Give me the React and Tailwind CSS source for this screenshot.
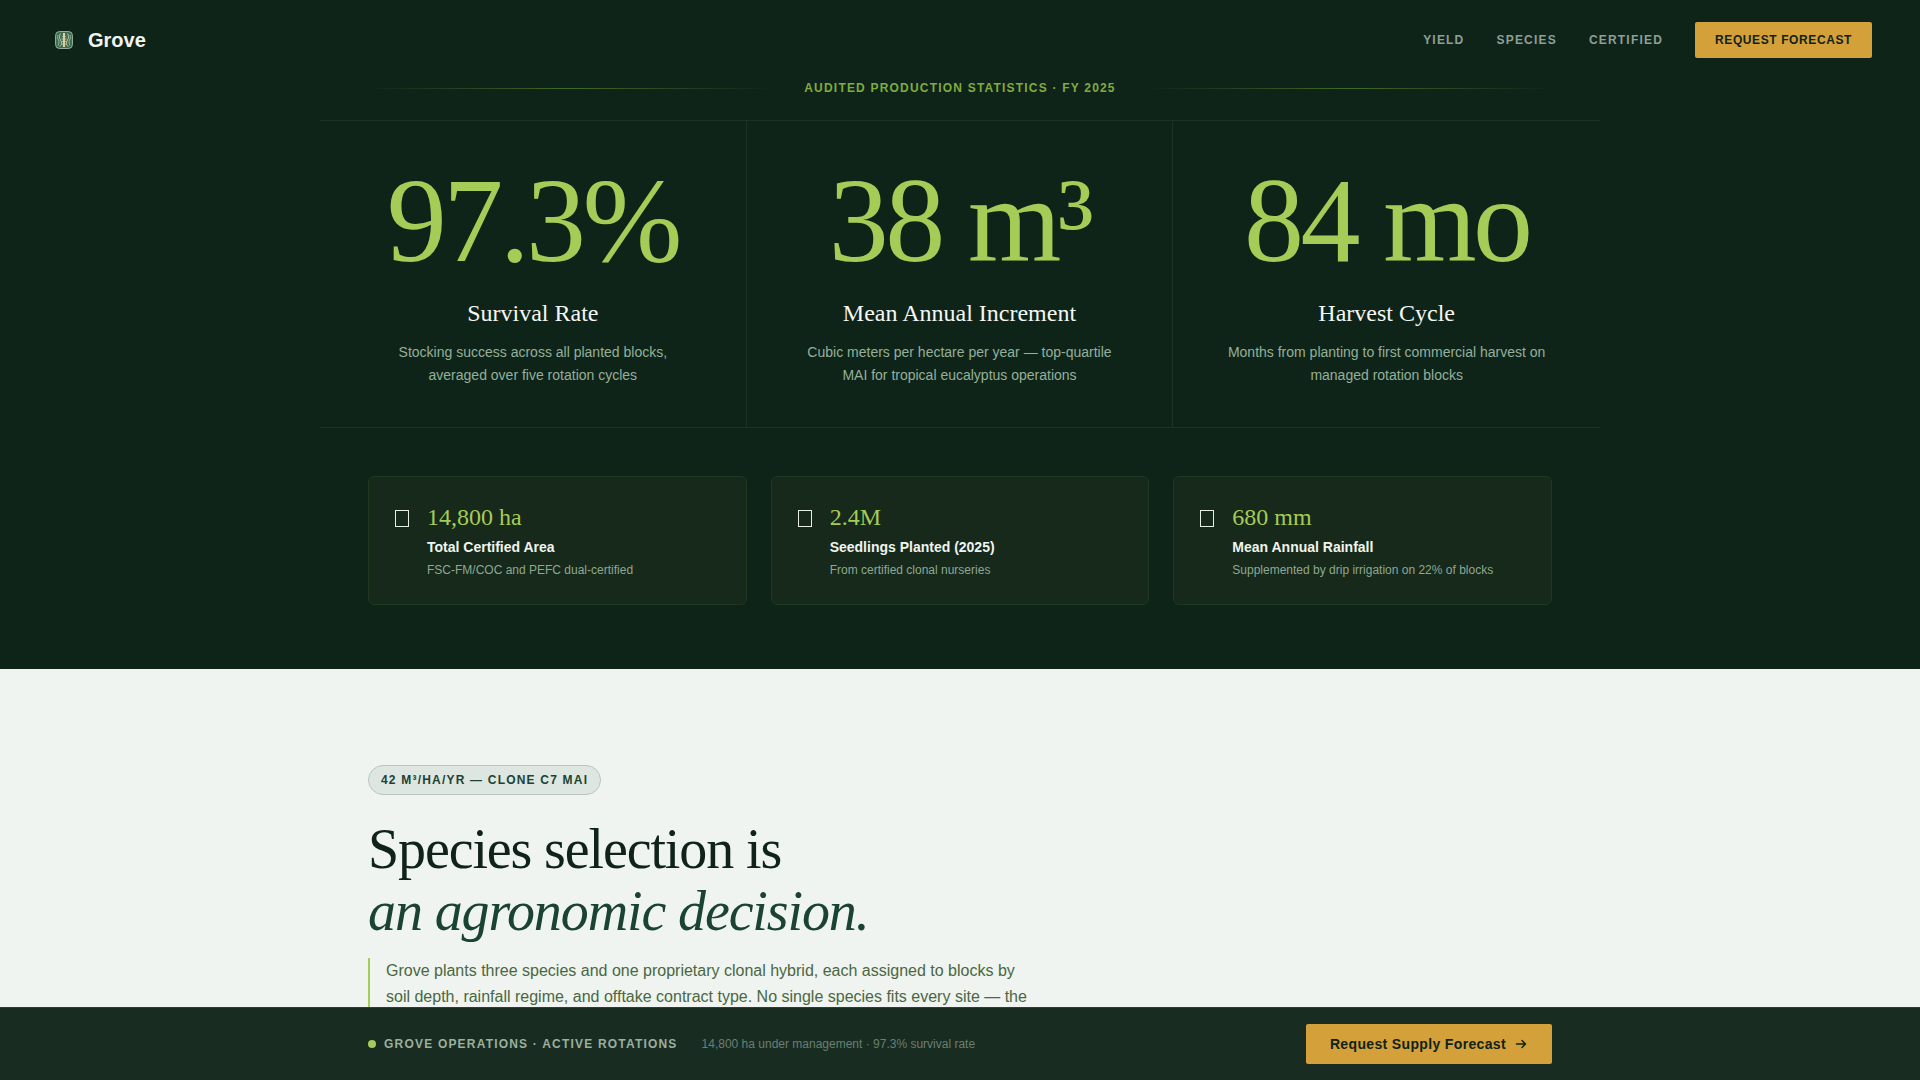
const stats = [
  { value: "97.3%", title: "Survival Rate", text: "Stocking success across all planted blocks, averaged over five rotation cycles" },
  { value: "38 m³", title: "Mean Annual Increment", text: "Cubic meters per hectare per year — top-quartile MAI for tropical eucalyptus operations" },
  { value: "84 mo", title: "Harvest Cycle", text: "Months from planting to first commercial harvest on managed rotation blocks" },
];

const facts = [
  { value: "14,800 ha", label: "Total Certified Area", note: "FSC-FM/COC and PEFC dual-certified" },
  { value: "2.4M", label: "Seedlings Planted (2025)", note: "From certified clonal nurseries" },
  { value: "680 mm", label: "Mean Annual Rainfall", note: "Supplemented by drip irrigation on 22% of blocks" },
];

function LogoMark() {
  return (
    <svg viewBox="0 0 18 18" className="size-[18px]" aria-hidden="true">
      <rect x="0.5" y="0.5" width="17" height="17" rx="4" fill="#426b52" stroke="#8fae98" />
      <g fill="none" stroke="#d3dbb4" strokeWidth="0.8">
        <path d="M9 2v14" stroke="#f2dcae" strokeWidth="1.8" />
        <path d="M7 5.500h4M6.500 8h5M6.500 10.500h5M7 13h4" stroke="#c9cf9c" />
        <path d="M5.500 2.500C4 5 4 6.500 5.500 9S7 13.500 5 15.500M12.500 2.500C14 5 14 6.500 12.500 9s-1.500 4.500.5 6.500" />
        <path d="M3 4c-1 2-.5 3.500.5 5S4 13 3 14.500M15 4c1 2 .5 3.500-.5 5s-.5 4 .5 5.500" stroke="#a9c99a" />
      </g>
    </svg>
  );
}

function BoxIcon() {
  return (
    <svg viewBox="0 0 18 32" className="h-8 w-[18px] shrink-0" fill="none" stroke="#e6eee8" aria-hidden="true">
      <rect x="2.5" y="9.5" width="13" height="16" />
    </svg>
  );
}

function Header() {
  return (
    <header className="flex h-20 items-center justify-between px-12">
      <a href="#top" className="flex items-center gap-2 text-[20px] font-bold text-[#f0f4f0]">
        <span className="flex size-8 items-center justify-center"><LogoMark /></span>
        Grove
      </a>
      <nav className="flex items-center gap-8 text-xs font-bold uppercase tracking-[0.1em] text-[#8f9f95]">
        <a href="#yield">Yield</a>
        <a href="#species">Species</a>
        <a href="#certified">Certified</a>
        <button type="button" className="h-9 rounded-xs bg-[#d4a03a] px-5 font-bold uppercase tracking-[0.05em] text-[#0f2318]">
          Request Forecast
        </button>
      </nav>
    </header>
  );
}

function Stats() {
  return (
    <section id="yield" className="mx-auto max-w-7xl pb-16">
      <div className="mb-6 flex items-center gap-8 px-12">
        <span className="h-px flex-1 bg-linear-to-r from-transparent via-[#42682a] to-transparent" />
        <h2 className="text-xs font-bold uppercase tracking-[0.1em] text-[#82ab3e]">
          Audited Production Statistics · FY 2025
        </h2>
        <span className="h-px flex-1 bg-linear-to-r from-transparent via-[#42682a] to-transparent" />
      </div>
      <div className="grid grid-cols-3 divide-x divide-[#1b3326] border-y border-[#1b3326] text-center">
        {stats.map((s) => (
          <div key={s.title} className="px-12 py-10">
            <p className="font-['Liberation_Serif',serif] text-[120px] leading-none tracking-[-0.03em] whitespace-nowrap text-[#a5cc56]">{s.value}</p>
            <h3 className="mt-4 font-['Liberation_Serif',serif] text-2xl text-[#f5f7f3]">{s.title}</h3>
            <p className="mt-3 text-sm leading-[23px] text-[#95b09a]">{s.text}</p>
          </div>
        ))}
      </div>
      <div className="mt-12 grid grid-cols-3 gap-6 px-12">
        {facts.map((f) => (
          <article key={f.label} className="flex gap-4 rounded-md border border-[#1e3822] bg-[#16291b] p-6">
            <BoxIcon />
            <div>
              <p className="font-['Liberation_Serif',serif] text-2xl text-[#a5cc56]">{f.value}</p>
              <h3 className="mt-1 text-sm font-bold text-[#f0f4f0]">{f.label}</h3>
              <p className="mt-1 text-xs leading-[19px] text-[#8ea892]">{f.note}</p>
            </div>
          </article>
        ))}
      </div>
    </section>
  );
}

function Species() {
  return (
    <section id="species" className="mx-auto max-w-7xl px-12 pt-24">
      <p className="flex h-[30px] w-fit items-center rounded-full border border-[#b9c6be] bg-[#dee6e1] px-3 text-xs font-bold uppercase tracking-[0.1em] text-[#1b4332]">
        42 m³/ha/yr — Clone C7 MAI
      </p>
      <h2 className="mt-[23px] font-['Liberation_Serif',serif] text-[56px] leading-[62px] tracking-[-0.02em] text-[#0f2318]">
        Species selection is
        <br />
        <em className="text-[#1b4332]">an agronomic decision.</em>
      </h2>
      <p className="mt-4 max-w-2xl border-l-2 border-[#a5cc56] pl-4 text-base leading-[26px] text-[#4a6741]">
        Grove plants three species and one proprietary clonal hybrid, each assigned to blocks by soil depth, rainfall regime, and offtake contract type. No single species fits every site — the
      </p>
    </section>
  );
}

function ActionBar() {
  return (
    <footer className="fixed inset-x-0 bottom-0 border-t border-[#2b402f] bg-[#182c22]">
      <div className="mx-auto flex max-w-7xl items-center justify-between px-12 py-4">
        <div className="flex items-center gap-6 text-xs">
          <p className="flex items-center gap-2 font-bold uppercase tracking-[0.1em] text-[#9bb09f]">
            <span className="size-2 rounded-full bg-[#a5cc56]" />
            Grove Operations · Active Rotations
          </p>
          <p className="text-[#6b7f72]">14,800 ha under management · 97.3% survival rate</p>
        </div>
        <button type="button" className="flex h-10 items-center gap-2 rounded-xs bg-[#d4a03a] px-6 text-sm font-bold tracking-wide text-[#0f2318]">
          Request Supply Forecast
          <svg viewBox="0 0 14 14" className="size-[14px]" fill="none" stroke="currentColor" strokeWidth="1.5" strokeLinecap="round" strokeLinejoin="round" aria-hidden="true">
            <path d="M2.500 7h9M8 3.500 11.500 7 8 10.500" />
          </svg>
        </button>
      </div>
    </footer>
  );
}

export default function App() {
  return (
    <div id="top" className="min-h-screen bg-[#eff4f0] font-['Liberation_Sans',Arial,sans-serif]">
      <div className="bg-[#0e2419]">
        <Header />
        <Stats />
      </div>
      <Species />
      <ActionBar />
    </div>
  );
}
